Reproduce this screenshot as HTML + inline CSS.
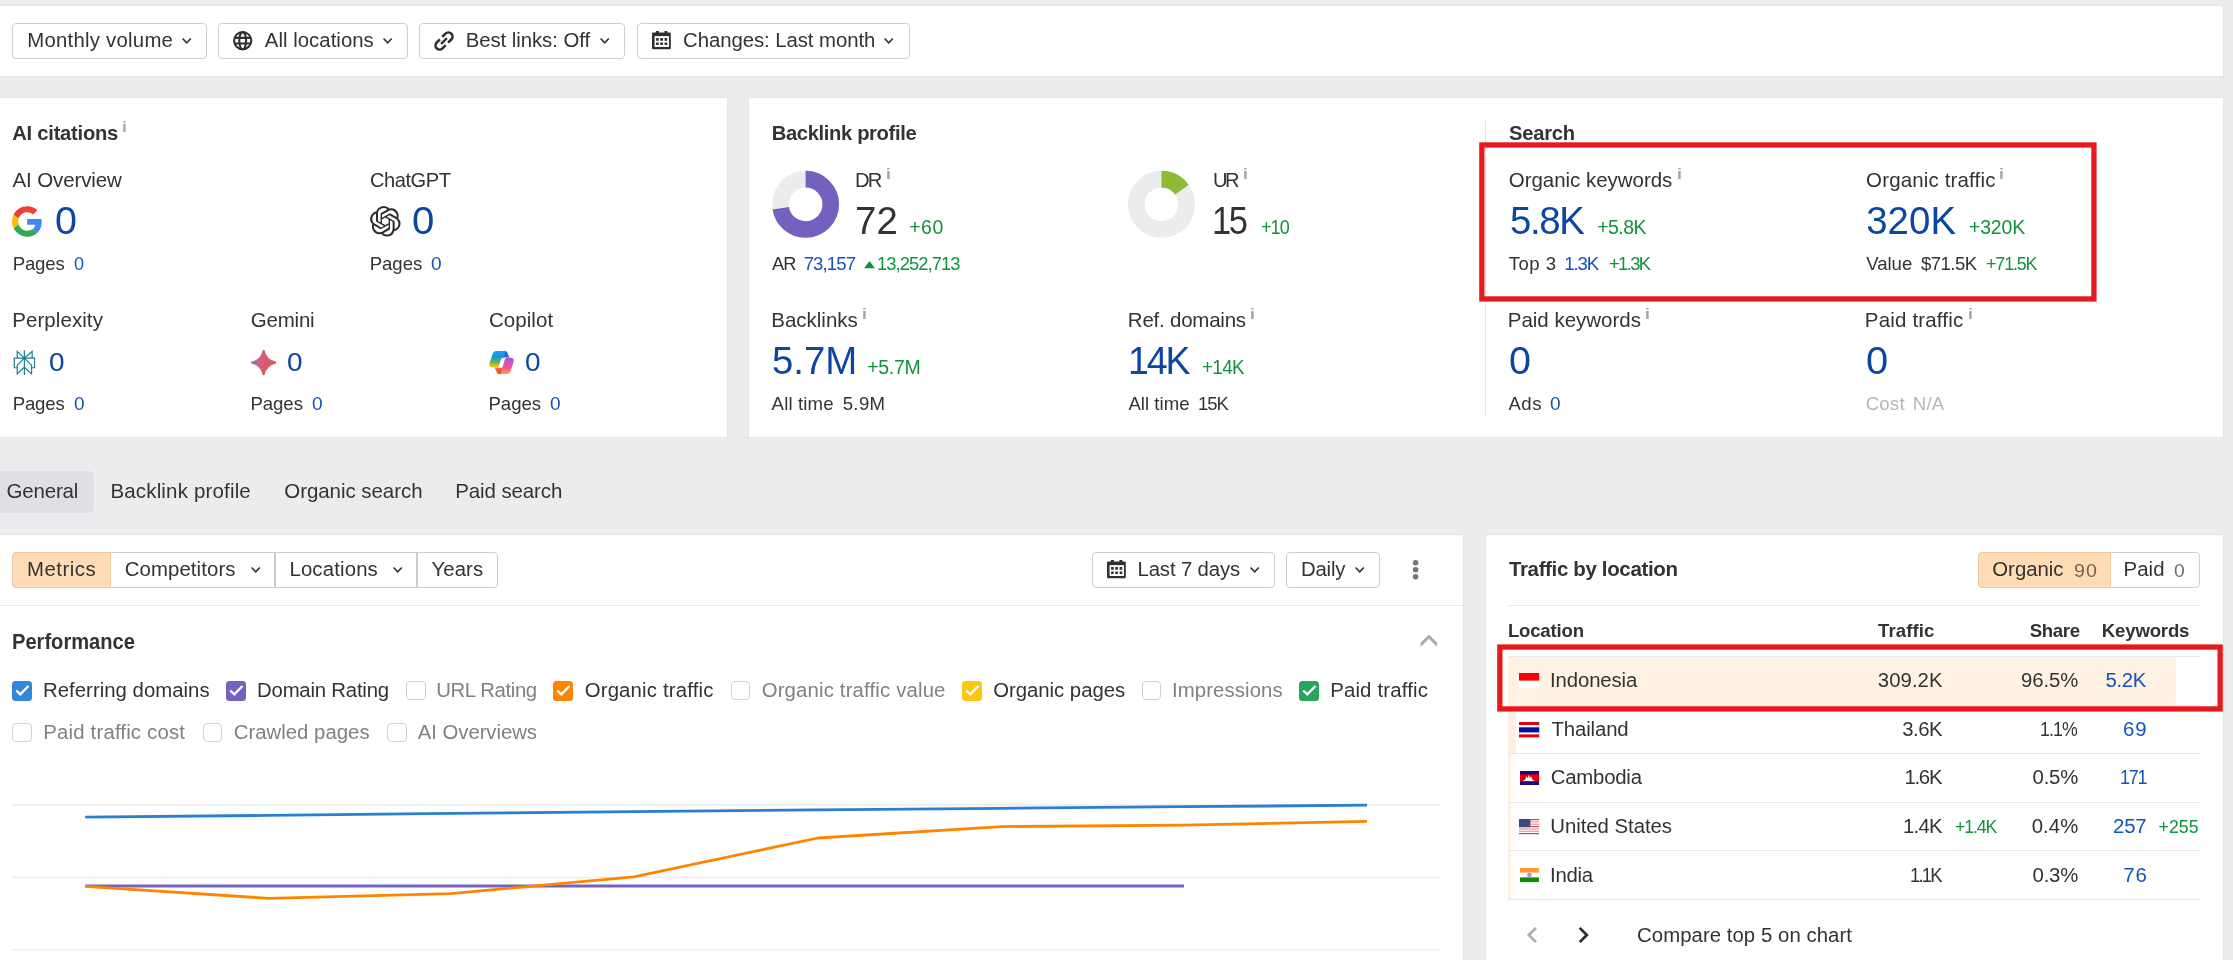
<!DOCTYPE html>
<html lang="en">
<head>
<meta charset="utf-8">
<title>Site overview</title>
<style>
html,body{margin:0;padding:0;background:#ebecee;}
body{font-family:"Liberation Sans",sans-serif;}
#root{will-change:transform;position:relative;width:2233px;height:960px;overflow:hidden;background:#ebecee;}
.t{position:absolute;white-space:nowrap;line-height:1;font-kerning:normal;}
.a{position:absolute;box-sizing:border-box;}
.w{background:#fff;box-shadow:0 0 0 1px rgba(40,50,70,0.035);}
.btn{position:absolute;box-sizing:border-box;border:1px solid #cfcfd1;border-radius:4px;background:#fff;}
.hl{position:absolute;height:1px;background:#e8e8ea;}
.red{position:absolute;box-sizing:border-box;border:5px solid #e21b22;}
.cb{position:absolute;box-sizing:border-box;width:20px;height:20px;border-radius:3.5px;}
.cb.off{border:1px solid #cfd1d5;background:#fff;width:19.4px;height:19.4px;margin:0.3px 0 0 0.2px;border-radius:4px;}
.cb svg{position:absolute;left:0;top:0;width:100%;height:100%;}
svg{position:absolute;overflow:visible;}
html,body{width:2233px;height:960px;overflow:hidden;}

</style>
</head>
<body>
<div id="root">
<!-- page blocks -->
<div class="a w" style="left:0;top:6px;width:2223px;height:70px;"></div>
<div class="a w" style="left:0;top:98px;width:727px;height:338.5px;"></div>
<div class="a w" style="left:749px;top:98px;width:1474px;height:338.5px;"></div>
<div class="a w" style="left:0;top:535px;width:1463px;height:425px;"></div>
<div class="a w" style="left:1486px;top:535px;width:737px;height:425px;"></div>

<!-- toolbar buttons -->
<div class="btn" style="left:12px;top:23px;width:195px;height:36px;"></div>
<div class="btn" style="left:218px;top:23px;width:190px;height:36px;"></div>
<div class="btn" style="left:419px;top:23px;width:206px;height:36px;"></div>
<div class="btn" style="left:637px;top:23px;width:273px;height:36px;"></div>
<svg style="left:181.95px;top:38.00px;" width="9.4" height="6" viewBox="0 0 9.4 6"><path d="M0.6 0.5L4.7 4.8L8.8 0.5" fill="none" stroke="#333" stroke-width="1.65"/></svg>
<svg style="left:382.65px;top:38.00px;" width="9.4" height="6" viewBox="0 0 9.4 6"><path d="M0.6 0.5L4.7 4.8L8.8 0.5" fill="none" stroke="#333" stroke-width="1.65"/></svg>
<svg style="left:599.95px;top:38.00px;" width="9.4" height="6" viewBox="0 0 9.4 6"><path d="M0.6 0.5L4.7 4.8L8.8 0.5" fill="none" stroke="#333" stroke-width="1.65"/></svg>
<svg style="left:883.65px;top:38.00px;" width="9.4" height="6" viewBox="0 0 9.4 6"><path d="M0.6 0.5L4.7 4.8L8.8 0.5" fill="none" stroke="#333" stroke-width="1.65"/></svg>

<!-- globe -->
<svg style="left:233.1px;top:31px;" width="19.4" height="19.4" viewBox="0 0 19.4 19.4"><g fill="none" stroke="#2f2f2f" stroke-width="2.1"><circle cx="9.7" cy="9.7" r="8.6"/><ellipse cx="9.7" cy="9.7" rx="3.4" ry="8.6"/><path d="M1.6 6.9h16.2M1.6 12.5h16.2"/></g></svg>
<!-- link -->
<svg style="left:433.8px;top:30.8px;" width="20" height="20" viewBox="-10 -10 20 20"><g transform="rotate(-45)" fill="none" stroke="#2f2f2f" stroke-width="2.55"><path d="M1.7 -4.1H6.2A4.1 4.1 0 0 1 6.2 4.1H1.7"/><path d="M-1.7 -4.1H-6.2A4.1 4.1 0 0 0 -6.2 4.1H-1.7"/><path d="M-4.1 0H4.1" stroke-width="2.2"/></g></svg>
<!-- calendar (toolbar) -->
<svg style="left:652.1px;top:30.9px;" width="18.8" height="18.2" viewBox="0 0 18.8 18.2"><path fill="#2f2f2f" d="M3.9 0h3v1.6h5.5V0h3v1.6h2.2a1.2 1.2 0 0 1 1.2 1.2V17a1.2 1.2 0 0 1-1.2 1.2H1.2A1.2 1.2 0 0 1 0 17V2.8a1.2 1.2 0 0 1 1.2-1.2h2.7z"/><rect x="2.55" y="5.1" width="14.45" height="10.9" fill="#fff"/><path fill="#2f2f2f" d="M4.1 7.1h2.6v2.6H4.1zM8.3 7.1h2.6v2.6H8.3zM12.6 7.1h2.6v2.6h-2.6zM4.1 11.5h2.6v2.6H4.1zM8.3 11.5h2.6v2.6H8.3zM12.6 11.5h2.6v2.6h-2.6z"/></svg>

<!-- AI icons -->
<svg style="left:11.8px;top:205.8px;" width="30.4" height="31" viewBox="0 0 48 48"><path fill="#EA4335" d="M24 9.5c3.54 0 6.71 1.22 9.21 3.6l6.85-6.85C35.9 2.38 30.47 0 24 0 14.62 0 6.51 5.38 2.56 13.22l7.98 6.19C12.43 13.72 17.74 9.5 24 9.5z"/><path fill="#4285F4" d="M46.98 24.55c0-1.57-.15-3.09-.38-4.55H24v9.02h12.94c-.58 2.96-2.26 5.48-4.78 7.18l7.73 6c4.51-4.18 7.09-10.36 7.09-17.65z"/><path fill="#FBBC05" d="M10.53 28.59c-.48-1.45-.76-2.99-.76-4.59s.27-3.14.76-4.59l-7.98-6.19C.92 16.46 0 20.12 0 24c0 3.88.92 7.54 2.56 10.78l7.97-6.19z"/><path fill="#34A853" d="M24 48c6.48 0 11.93-2.13 15.89-5.81l-7.73-6c-2.15 1.45-4.92 2.3-8.16 2.3-6.26 0-11.57-4.22-13.47-9.91l-7.98 6.19C6.51 42.62 14.62 48 24 48z"/></svg>
<svg style="left:369.6px;top:206px;" width="30.6" height="30.6" viewBox="0 0 24 24"><path fill="#2b2b2b" d="M22.2819 9.8211a5.9847 5.9847 0 0 0-.5157-4.9108 6.0462 6.0462 0 0 0-6.5098-2.9A6.0651 6.0651 0 0 0 4.9807 4.1818a5.9847 5.9847 0 0 0-3.9977 2.9 6.0462 6.0462 0 0 0 .7427 7.0966 5.98 5.98 0 0 0 .511 4.9107 6.051 6.051 0 0 0 6.5146 2.9001A5.9847 5.9847 0 0 0 13.2599 24a6.0557 6.0557 0 0 0 5.7718-4.2058 5.9894 5.9894 0 0 0 3.9977-2.9001 6.0557 6.0557 0 0 0-.7475-7.0729zm-9.022 12.6081a4.4755 4.4755 0 0 1-2.8764-1.0408l.1419-.0804 4.7783-2.7582a.7948.7948 0 0 0 .3927-.6813v-6.7369l2.02 1.1686a.071.071 0 0 1 .038.052v5.5826a4.504 4.504 0 0 1-4.4945 4.4944zm-9.6607-4.1254a4.4708 4.4708 0 0 1-.5346-3.0137l.142.0852 4.783 2.7582a.7712.7712 0 0 0 .7806 0l5.8428-3.3685v2.3324a.0804.0804 0 0 1-.0332.0615L9.74 19.9502a4.4992 4.4992 0 0 1-6.1408-1.6464zM2.3408 7.8956a4.485 4.485 0 0 1 2.3655-1.9728V11.6a.7664.7664 0 0 0 .3879.6765l5.8144 3.3543-2.0201 1.1685a.0757.0757 0 0 1-.071 0l-4.8303-2.7865A4.504 4.504 0 0 1 2.3408 7.872zm16.5963 3.8558L13.1038 8.364 15.1192 7.2a.0757.0757 0 0 1 .071 0l4.8303 2.7913a4.4944 4.4944 0 0 1-.6765 8.1042v-5.6772a.79.79 0 0 0-.407-.667zm2.0107-3.0231l-.142-.0852-4.7735-2.7818a.7759.7759 0 0 0-.7854 0L9.409 9.2297V6.8974a.0662.0662 0 0 1 .0284-.0615l4.8303-2.7866a4.4992 4.4992 0 0 1 6.6802 4.66zM8.3065 12.863l-2.02-1.1638a.0804.0804 0 0 1-.038-.0567V6.0742a4.4992 4.4992 0 0 1 7.3757-3.4537l-.142.0805L8.704 5.459a.7948.7948 0 0 0-.3927.6813zm1.0976-2.3654l2.602-1.4998 2.6069 1.4998v2.9994l-2.5974 1.4997-2.6067-1.4997Z"/></svg>
<!-- perplexity -->
<svg style="left:12.2px;top:349.9px;" width="24.8" height="25.2" viewBox="0 0 24 24" preserveAspectRatio="none"><path fill="#20808d" d="M22.3977 7.0896h-2.3106V.0676l-7.5094 6.3542V.1577h-1.1554v6.1966L4.4904 0v7.0896H1.6023v10.3976h2.8882V24l6.932-6.3591v6.2005h1.1554v-6.0469l6.9318 6.1807v-6.4879h2.8882V7.0896zm-3.4657-4.531v4.531h-5.355l5.355-4.531zm-13.2862.0676 4.8691 4.4634H5.6458V2.6262zM2.7576 16.332V8.245h7.8476l-6.1149 6.1147v1.9723H2.7576zm2.8882 5.0404v-6.5328l5.7768-5.7767v7.0111l-5.7768 5.2984zm12.7086.0248-5.7766-5.1509V9.0618l5.7766 5.7766v6.5588zm2.8882-5.0652h-1.733v-1.9723L13.3948 8.245h7.8478v8.087z"/></svg>
<!-- gemini -->
<svg style="left:250.8px;top:349.9px;" width="25.2" height="25.2" viewBox="-12.6 -12.6 25.2 25.2"><defs><linearGradient id="gm" x1="0" y1="0" x2="1" y2="0"><stop offset="0" stop-color="#9a6fd2"/><stop offset="0.22" stop-color="#b9689f"/><stop offset="0.45" stop-color="#d65c70"/><stop offset="1" stop-color="#db5a58"/></linearGradient></defs><path fill="url(#gm)" d="M-0.8 -12.6H0.8Q2.8 -2.8 12.6 -0.8V0.8Q2.8 2.8 0.8 12.6H-0.8Q-2.8 2.8 -12.6 0.8V-0.8Q-2.8 -2.8 -0.8 -12.6Z"/></svg>
<!-- copilot -->
<svg style="left:488.9px;top:351px;" width="25.1" height="23" viewBox="0 0 25.1 23"><defs>
<linearGradient id="cpa" x1="0" y1="0" x2="0" y2="1"><stop offset="0" stop-color="#1da2f2"/><stop offset="0.3" stop-color="#1593de"/><stop offset="0.62" stop-color="#4db06a"/><stop offset="0.85" stop-color="#c9c51e"/><stop offset="1" stop-color="#f7c40e"/></linearGradient>
<linearGradient id="cpb" x1="0" y1="0" x2="0" y2="1"><stop offset="0" stop-color="#a64ef2"/><stop offset="0.35" stop-color="#d653b3"/><stop offset="0.65" stop-color="#ef5a85"/><stop offset="1" stop-color="#ff9d4b"/></linearGradient>
<linearGradient id="cpc" x1="0" y1="0" x2="1" y2="1"><stop offset="0" stop-color="#1a3fd0"/><stop offset="1" stop-color="#2a82e4"/></linearGradient>
<linearGradient id="cpd" x1="0" y1="0" x2="0.4" y2="1"><stop offset="0" stop-color="#ff7a3c"/><stop offset="1" stop-color="#e43d3a"/></linearGradient>
</defs>
<path fill="url(#cpc)" d="M13.6 0H15.6Q17.9 0 18.6 1.9L20.4 6.6H12.6Z"/>
<path fill="url(#cpd)" d="M5.6 16.4H14.2L12.8 23H10.2Q8.3 23 7.7 21.2Z"/>
<path fill="url(#cpa)" d="M7.7 0H14.8Q16.6 0 16.1 1.7L12.3 14.6Q11.6 16.8 9.3 16.7L3.2 16.2Q-0.3 15.8 0.4 12.7L3.5 2.9Q4.5 0 7.7 0Z"/>
<path fill="#fff" d="M12.4 7.3H16.2L13.3 16.6H9.4Z"/>
<path fill="url(#cpb)" d="M19 6.4L22 6.8Q25.5 7.2 24.7 10.2L21.6 20.2Q20.7 23 17.6 23H13.3Q11.3 23 11.9 21L15.9 8.4Q16.6 6.2 19 6.4Z"/>
</svg>

<!-- donuts -->
<svg style="left:0;top:160px;" width="1300" height="90" viewBox="0 160 1300 90"><circle cx="805.6" cy="204.3" r="25.15" fill="none" stroke="#ebecee" stroke-width="16.6"/><circle cx="805.6" cy="204.3" r="25.15" fill="none" stroke="#7461bf" stroke-width="16.6" stroke-dasharray="113.78 200" transform="rotate(-90 805.6 204.3)"/><circle cx="1161.5" cy="204.3" r="25.15" fill="none" stroke="#ebecee" stroke-width="16.6"/><circle cx="1161.5" cy="204.3" r="25.15" fill="none" stroke="#8fba38" stroke-width="16.6" stroke-dasharray="23.7 200" transform="rotate(-90 1161.5 204.3)"/></svg>
<!-- AR triangle -->
<svg style="left:864px;top:261px;" width="11" height="7.2" viewBox="0 0 11 7.2"><path d="M5.5 0L11 7.2H0Z" fill="#12913f"/></svg>

<!-- search divider -->
<div class="a" style="left:1485px;top:121px;width:1px;height:294px;background:#e3e4e7;"></div>
<svg style="left:0;top:0;" width="2233" height="320" viewBox="0 0 2233 320"><rect x="1481.85" y="144.95" width="612.1" height="154" fill="none" stroke="#e41a1c" stroke-width="5.3"/></svg>

<!-- tabs -->
<div class="a" style="left:-6px;top:471px;width:100px;height:41.6px;border-radius:5px;background:#dee0e5;"></div>

<!-- chart header -->
<div class="a" style="left:12px;top:552px;width:486px;height:36px;border:1px solid #cfcfd1;border-radius:4px;background:#fff;"></div>
<div class="a" style="left:12px;top:552px;width:99px;height:36px;border:1px solid #edc9a1;border-radius:4px 0 0 4px;background:#ffdcb5;"></div>
<div class="a" style="left:274px;top:552px;width:2px;height:36px;background:#cbcccf;"></div>
<div class="a" style="left:416px;top:552px;width:2px;height:36px;background:#cbcccf;"></div>
<svg style="left:250.65px;top:567.40px;" width="9.4" height="6" viewBox="0 0 9.4 6"><path d="M0.6 0.5L4.7 4.8L8.8 0.5" fill="none" stroke="#333" stroke-width="1.65"/></svg>
<svg style="left:392.85px;top:567.40px;" width="9.4" height="6" viewBox="0 0 9.4 6"><path d="M0.6 0.5L4.7 4.8L8.8 0.5" fill="none" stroke="#333" stroke-width="1.65"/></svg>

<div class="btn" style="left:1092px;top:552px;width:183px;height:36px;"></div>
<div class="btn" style="left:1286px;top:552px;width:94px;height:36px;"></div>
<svg style="left:1106.9px;top:559.9px;" width="18.8" height="18.2" viewBox="0 0 18.8 18.2"><path fill="#2f2f2f" d="M3.9 0h3v1.6h5.5V0h3v1.6h2.2a1.2 1.2 0 0 1 1.2 1.2V17a1.2 1.2 0 0 1-1.2 1.2H1.2A1.2 1.2 0 0 1 0 17V2.8a1.2 1.2 0 0 1 1.2-1.2h2.7z"/><rect x="2.55" y="5.1" width="14.45" height="10.9" fill="#fff"/><path fill="#2f2f2f" d="M4.1 7.1h2.6v2.6H4.1zM8.3 7.1h2.6v2.6H8.3zM12.6 7.1h2.6v2.6h-2.6zM4.1 11.5h2.6v2.6H4.1zM8.3 11.5h2.6v2.6H8.3zM12.6 11.5h2.6v2.6h-2.6z"/></svg>
<svg style="left:1250.05px;top:567.00px;" width="9.4" height="6" viewBox="0 0 9.4 6"><path d="M0.6 0.5L4.7 4.8L8.8 0.5" fill="none" stroke="#333" stroke-width="1.65"/></svg>
<svg style="left:1355.15px;top:567.00px;" width="9.4" height="6" viewBox="0 0 9.4 6"><path d="M0.6 0.5L4.7 4.8L8.8 0.5" fill="none" stroke="#333" stroke-width="1.65"/></svg>
<div class="hl" style="left:0;top:605px;width:1463px;"></div>

<!-- checkboxes -->
<div class="cb" style="left:12px;top:680.5px;background:#3187d8;"><svg viewBox="0 0 20 20"><path d="M4.3 9.5L8.3 13.4L16.5 5" fill="none" stroke="#fff" stroke-width="2.4"/></svg></div>
<div class="cb" style="left:226px;top:680.5px;background:#7462c2;"><svg viewBox="0 0 20 20"><path d="M4.3 9.5L8.3 13.4L16.5 5" fill="none" stroke="#fff" stroke-width="2.4"/></svg></div>
<div class="cb off" style="left:406px;top:680.5px;"></div>
<div class="cb" style="left:553px;top:680.5px;background:#ff8500;"><svg viewBox="0 0 20 20"><path d="M4.3 9.5L8.3 13.4L16.5 5" fill="none" stroke="#fff" stroke-width="2.4"/></svg></div>
<div class="cb off" style="left:730.5px;top:680.5px;"></div>
<div class="cb" style="left:962px;top:680.5px;background:#fbc614;"><svg viewBox="0 0 20 20"><path d="M4.3 9.5L8.3 13.4L16.5 5" fill="none" stroke="#fff" stroke-width="2.4"/></svg></div>
<div class="cb off" style="left:1141.5px;top:680.5px;"></div>
<div class="cb" style="left:1299px;top:680.5px;background:#27a65b;"><svg viewBox="0 0 20 20"><path d="M4.3 9.5L8.3 13.4L16.5 5" fill="none" stroke="#fff" stroke-width="2.4"/></svg></div>
<div class="cb off" style="left:12px;top:722.5px;"></div>
<div class="cb off" style="left:202.5px;top:722.5px;"></div>
<div class="cb off" style="left:387px;top:722.5px;"></div>

<!-- chart -->
<svg style="left:0;top:780px;" width="1463" height="180" viewBox="0 780 1463 180">
<g stroke="#ececee" stroke-width="1.3"><path d="M12 805H1440M12 877.4H1440M12 949.8H1440"/></g>
<path d="M85.2 886H1184" fill="none" stroke="#7462c2" stroke-width="2.8"/>
<path d="M85.2 817.1L268.3 815.4L451.3 813.4L634.4 811.7L817.5 809.9L1000.6 808.3L1183.7 806.7L1367 805.2" fill="none" stroke="#2b7fd1" stroke-width="2.8"/>
<path d="M85.2 886.4L268.4 898.3L450.9 893.6L633.8 876.8L818 838L1001.6 826.6L1183.7 825.1L1367 821.4" fill="none" stroke="#ff8500" stroke-width="2.8" stroke-linejoin="round"/>
</svg>

<!-- traffic by location -->
<div class="a" style="left:1978px;top:552px;width:222px;height:36px;border:1px solid #cfcfd1;border-radius:4px;background:#fff;"></div>
<div class="a" style="left:1978px;top:552px;width:132.6px;height:36px;border:1px solid #edc9a1;border-radius:4px 0 0 4px;background:#ffdcb5;"></div>
<div class="hl" style="left:1508px;top:605px;width:692px;"></div>

<div class="hl" style="left:1508px;top:656px;width:692px;"></div>
<div class="a" style="left:1508px;top:656.6px;width:667.8px;height:48.6px;background:#fff2e5;"></div>
<div class="hl" style="left:1508px;top:704.8px;width:692px;"></div>
<div class="a" style="left:1508px;top:705.8px;width:7.9px;height:47px;background:#fdf1e3;"></div>
<div class="hl" style="left:1508px;top:752.6px;width:692px;"></div>
<div class="a" style="left:1508px;top:753.6px;width:3.4px;height:48px;background:#fdf1e3;"></div>
<div class="hl" style="left:1508px;top:801.8px;width:692px;"></div>
<div class="a" style="left:1508px;top:802.8px;width:2.8px;height:47px;background:#fdf1e3;"></div>
<div class="hl" style="left:1508px;top:850px;width:692px;"></div>
<div class="a" style="left:1508px;top:851px;width:2.6px;height:48px;background:#fdf1e3;"></div>
<div class="hl" style="left:1508px;top:899px;width:692px;"></div>

<!-- flags -->
<svg style="left:1518.9px;top:672.75px;" width="20.2" height="15.25" viewBox="0 0 20 15" preserveAspectRatio="none"><rect width="20" height="15" fill="#fff"/><rect width="20" height="7.5" fill="#f90008"/></svg>
<svg style="left:1518.9px;top:721.75px;" width="20.2" height="15.4" viewBox="0 0 20 15.4" preserveAspectRatio="none"><rect width="20" height="15.4" fill="#e30008"/><rect y="3" width="20" height="9.4" fill="#fff"/><rect y="5.3" width="20" height="5.1" fill="#00159b"/></svg>
<svg style="left:1519.9px;top:771px;" width="19.1" height="14" viewBox="0 0 19.1 14" preserveAspectRatio="none"><rect width="19.1" height="14" fill="#1b0b7d"/><rect y="3.3" width="19.1" height="7.3" fill="#e30008"/><path fill="#fff" d="M3.2 9.9l.9-.9h.9V7.7h.8V6.6l.6-1.6.6 1.6v.5h.8V6.1l.9-2.2.9 2.2v1h.8v-.5l.6-1.6.6 1.6v1.1h.8V9h.9l.9.9z"/></svg>
<svg style="left:1519px;top:818.8px;" width="20.1" height="15.2" viewBox="0 0 20 15" preserveAspectRatio="none"><rect width="20" height="15" fill="#fff"/><g fill="#c8414f"><rect width="20" height="1.15"/><rect y="2.3" width="20" height="1.15" opacity=".55"/><rect y="4.6" width="20" height="1.15" opacity=".55"/><rect y="6.9" width="20" height="1.15"/><rect y="9.2" width="20" height="1.15" opacity=".55"/><rect y="11.5" width="20" height="1.15" opacity=".55"/><rect y="13.85" width="20" height="1.15"/></g><rect width="11.3" height="8.05" fill="#3d4a7c"/></svg>
<svg style="left:1520px;top:867.9px;" width="18.9" height="14.1" viewBox="0 0 20 15" preserveAspectRatio="none"><rect width="20" height="15" fill="#fff"/><rect width="20" height="4.9" fill="#ff9933"/><rect y="10" width="20" height="5" fill="#128807"/><circle cx="10" cy="7.5" r="2.5" fill="#9c9cdc"/></svg>

<svg style="left:0;top:600px;" width="2233" height="140" viewBox="0 600 2233 140"><rect x="1499.85" y="647.05" width="720.3" height="61.9" fill="none" stroke="#e41a1c" stroke-width="5.3"/></svg>

<!-- pager -->
<svg style="left:0;top:0;" width="2233" height="960" viewBox="0 0 2233 960"><path d="M1535.95 927.85L1528.8 935L1535.95 942.15" fill="none" stroke="#adaeb0" stroke-width="2.7"/><path d="M1579.7 927.85L1586.85 935L1579.7 942.15" fill="none" stroke="#2b2b2b" stroke-width="2.7"/>
<path d="M1420.6 642.65L1428.85 634.4L1437.1 642.65V646.9L1428.85 638.64L1420.6 646.9Z" fill="#a9aaac"/>
<g fill="#757678"><circle cx="1415.6" cy="562.75" r="2.8"/><circle cx="1415.6" cy="569.75" r="2.8"/><circle cx="1415.6" cy="576.75" r="2.8"/></g>
</svg>

<span class="t" style="left:27.29px;top:29.77px;font-size:20.35px;color:#333333;letter-spacing:0.241px;">Monthly volume</span>
<span class="t" style="left:264.81px;top:29.77px;font-size:20.35px;color:#333333;letter-spacing:0.036px;">All locations</span>
<span class="t" style="left:465.71px;top:29.77px;font-size:20.35px;color:#333333;letter-spacing:-0.057px;">Best links: Off</span>
<span class="t" style="left:683.11px;top:29.77px;font-size:20.35px;color:#333333;letter-spacing:-0.066px;">Changes: Last month</span>
<span class="t" style="left:12.30px;top:122.90px;font-size:20.2px;color:#333333;letter-spacing:-0.255px;font-weight:700;">AI citations</span>
<span class="t" style="left:122.05px;top:119.32px;font-size:15.22px;color:#a3a5a9;transform:scaleX(1.1500);transform-origin:0 0;font-weight:700;">i</span>
<span class="t" style="left:771.67px;top:122.90px;font-size:20.2px;color:#333333;letter-spacing:-0.352px;font-weight:700;">Backlink profile</span>
<span class="t" style="left:1508.96px;top:122.70px;font-size:20.2px;color:#333333;letter-spacing:-0.237px;font-weight:700;">Search</span>
<span class="t" style="left:12.51px;top:169.66px;font-size:20.49px;color:#333333;letter-spacing:-0.113px;">AI Overview</span>
<span class="t" style="left:370.12px;top:169.66px;font-size:20.49px;color:#333333;letter-spacing:-0.450px;transform:scaleX(0.9789);transform-origin:0 0;">ChatGPT</span>
<span class="t" style="left:854.91px;top:169.66px;font-size:20.49px;color:#333333;letter-spacing:-1.961px;transform:scaleX(0.9875);transform-origin:0 0;">DR</span>
<span class="t" style="left:885.85px;top:166.12px;font-size:15.22px;color:#a3a5a9;transform:scaleX(1.1500);transform-origin:0 0;font-weight:700;">i</span>
<span class="t" style="left:1213.12px;top:169.66px;font-size:20.49px;color:#333333;letter-spacing:-2.562px;transform:scaleX(0.9793);transform-origin:0 0;">UR</span>
<span class="t" style="left:1242.65px;top:166.12px;font-size:15.22px;color:#a3a5a9;transform:scaleX(1.1500);transform-origin:0 0;font-weight:700;">i</span>
<span class="t" style="left:1508.77px;top:169.66px;font-size:20.49px;color:#333333;letter-spacing:-0.026px;">Organic keywords</span>
<span class="t" style="left:1676.85px;top:166.12px;font-size:15.22px;color:#a3a5a9;transform:scaleX(1.1500);transform-origin:0 0;font-weight:700;">i</span>
<span class="t" style="left:1866.11px;top:169.66px;font-size:20.49px;color:#333333;letter-spacing:0.154px;">Organic traffic</span>
<span class="t" style="left:1999.05px;top:166.12px;font-size:15.22px;color:#a3a5a9;transform:scaleX(1.1500);transform-origin:0 0;font-weight:700;">i</span>
<span class="t" style="left:55.26px;top:201.52px;font-size:38.37px;color:#0c46a3;transform:scaleX(1.0293);transform-origin:0 0;">0</span>
<span class="t" style="left:411.93px;top:201.52px;font-size:38.37px;color:#0c46a3;transform:scaleX(1.0481);transform-origin:0 0;">0</span>
<span class="t" style="left:855.00px;top:201.52px;font-size:38.37px;color:#333333;letter-spacing:0.172px;">72</span>
<span class="t" style="left:909.33px;top:217.51px;font-size:19.48px;color:#12913f;letter-spacing:0.427px;">+60</span>
<span class="t" style="left:1211.50px;top:201.52px;font-size:38.37px;color:#333333;letter-spacing:-2.710px;transform:scaleX(0.8998);transform-origin:0 0;">15</span>
<span class="t" style="left:1260.90px;top:217.51px;font-size:19.48px;color:#12913f;letter-spacing:-1.012px;transform:scaleX(0.9279);transform-origin:0 0;">+10</span>
<span class="t" style="left:1510.10px;top:201.52px;font-size:38.37px;color:#0c46a3;letter-spacing:-1.412px;">5.8K</span>
<span class="t" style="left:1597.33px;top:217.51px;font-size:19.48px;color:#12913f;letter-spacing:-0.588px;">+5.8K</span>
<span class="t" style="left:1866.20px;top:201.52px;font-size:38.37px;color:#0c46a3;letter-spacing:0.096px;">320K</span>
<span class="t" style="left:1968.99px;top:217.51px;font-size:19.48px;color:#12913f;letter-spacing:-0.171px;">+320K</span>
<span class="t" style="left:12.65px;top:255.26px;font-size:18.6px;color:#333333;letter-spacing:-0.146px;">Pages</span>
<span class="t" style="left:73.60px;top:255.26px;font-size:18.6px;color:#1553b7;transform:scaleX(0.9714);transform-origin:0 0;">0</span>
<span class="t" style="left:369.65px;top:255.26px;font-size:18.6px;color:#333333;letter-spacing:-0.021px;">Pages</span>
<span class="t" style="left:431.25px;top:255.26px;font-size:18.6px;color:#1553b7;transform:scaleX(1.0243);transform-origin:0 0;">0</span>
<span class="t" style="left:771.80px;top:255.26px;font-size:18.6px;color:#333333;letter-spacing:-0.862px;transform:scaleX(0.9846);transform-origin:0 0;">AR</span>
<span class="t" style="left:803.66px;top:255.26px;font-size:18.6px;color:#1553b7;letter-spacing:-0.905px;">73,157</span>
<span class="t" style="left:877.22px;top:255.26px;font-size:18.6px;color:#12913f;letter-spacing:-0.917px;transform:scaleX(0.9836);transform-origin:0 0;">13,252,713</span>
<span class="t" style="left:1508.87px;top:255.26px;font-size:18.6px;color:#333333;letter-spacing:0.431px;">Top 3</span>
<span class="t" style="left:1564.28px;top:255.26px;font-size:18.6px;color:#1553b7;letter-spacing:-1.134px;">1.3K</span>
<span class="t" style="left:1609.30px;top:255.26px;font-size:18.6px;color:#12913f;letter-spacing:-1.634px;transform:scaleX(0.9888);transform-origin:0 0;">+1.3K</span>
<span class="t" style="left:1866.19px;top:255.26px;font-size:18.6px;color:#333333;letter-spacing:-0.024px;">Value</span>
<span class="t" style="left:1920.70px;top:255.26px;font-size:18.6px;color:#333333;letter-spacing:-0.553px;transform:scaleX(0.9973);transform-origin:0 0;">$71.5K</span>
<span class="t" style="left:1985.80px;top:255.26px;font-size:18.6px;color:#12913f;letter-spacing:-1.171px;transform:scaleX(0.9614);transform-origin:0 0;">+71.5K</span>
<span class="t" style="left:12.21px;top:309.66px;font-size:20.49px;color:#333333;letter-spacing:0.081px;">Perplexity</span>
<span class="t" style="left:250.71px;top:309.66px;font-size:20.49px;color:#333333;letter-spacing:-0.190px;">Gemini</span>
<span class="t" style="left:488.96px;top:309.66px;font-size:20.49px;color:#333333;letter-spacing:0.071px;">Copilot</span>
<span class="t" style="left:771.21px;top:309.66px;font-size:20.49px;color:#333333;letter-spacing:0.010px;">Backlinks</span>
<span class="t" style="left:861.65px;top:306.22px;font-size:15.22px;color:#a3a5a9;transform:scaleX(1.1500);transform-origin:0 0;font-weight:700;">i</span>
<span class="t" style="left:1127.87px;top:309.66px;font-size:20.49px;color:#333333;letter-spacing:-0.224px;">Ref. domains</span>
<span class="t" style="left:1249.85px;top:306.22px;font-size:15.22px;color:#a3a5a9;transform:scaleX(1.1500);transform-origin:0 0;font-weight:700;">i</span>
<span class="t" style="left:1507.76px;top:309.66px;font-size:20.49px;color:#333333;">Paid keywords</span>
<span class="t" style="left:1644.85px;top:306.22px;font-size:15.22px;color:#a3a5a9;transform:scaleX(1.1500);transform-origin:0 0;font-weight:700;">i</span>
<span class="t" style="left:1864.87px;top:309.66px;font-size:20.49px;color:#333333;letter-spacing:0.177px;">Paid traffic</span>
<span class="t" style="left:1967.75px;top:306.22px;font-size:15.22px;color:#a3a5a9;transform:scaleX(1.1500);transform-origin:0 0;font-weight:700;">i</span>
<span class="t" style="left:49.10px;top:350.07px;font-size:25.44px;color:#0c46a3;transform:scaleX(1.0989);transform-origin:0 0;">0</span>
<span class="t" style="left:287.10px;top:350.07px;font-size:25.44px;color:#0c46a3;transform:scaleX(1.0989);transform-origin:0 0;">0</span>
<span class="t" style="left:525.10px;top:350.07px;font-size:25.44px;color:#0c46a3;transform:scaleX(1.0989);transform-origin:0 0;">0</span>
<span class="t" style="left:772.10px;top:341.52px;font-size:38.37px;color:#0c46a3;letter-spacing:-0.066px;">5.7M</span>
<span class="t" style="left:867.15px;top:357.51px;font-size:19.48px;color:#12913f;letter-spacing:-0.248px;">+5.7M</span>
<span class="t" style="left:1128.35px;top:341.52px;font-size:38.37px;color:#0c46a3;letter-spacing:-2.054px;transform:scaleX(0.9751);transform-origin:0 0;">14K</span>
<span class="t" style="left:1201.90px;top:357.51px;font-size:19.48px;color:#12913f;letter-spacing:-0.698px;transform:scaleX(0.9684);transform-origin:0 0;">+14K</span>
<span class="t" style="left:1509.25px;top:341.52px;font-size:38.37px;color:#0c46a3;transform:scaleX(1.0283);transform-origin:0 0;">0</span>
<span class="t" style="left:1866.24px;top:341.52px;font-size:38.37px;color:#0c46a3;transform:scaleX(1.0388);transform-origin:0 0;">0</span>
<span class="t" style="left:12.65px;top:395.26px;font-size:18.6px;color:#333333;letter-spacing:-0.146px;">Pages</span>
<span class="t" style="left:73.73px;top:395.26px;font-size:18.6px;color:#1553b7;transform:scaleX(1.0251);transform-origin:0 0;">0</span>
<span class="t" style="left:250.38px;top:395.26px;font-size:18.6px;color:#333333;letter-spacing:-0.031px;">Pages</span>
<span class="t" style="left:311.53px;top:395.26px;font-size:18.6px;color:#1553b7;transform:scaleX(1.0251);transform-origin:0 0;">0</span>
<span class="t" style="left:488.56px;top:395.26px;font-size:18.6px;color:#333333;letter-spacing:-0.077px;">Pages</span>
<span class="t" style="left:550.25px;top:395.26px;font-size:18.6px;color:#1553b7;transform:scaleX(1.0243);transform-origin:0 0;">0</span>
<span class="t" style="left:771.59px;top:395.26px;font-size:18.6px;color:#333333;letter-spacing:0.152px;">All time</span>
<span class="t" style="left:842.69px;top:395.26px;font-size:18.6px;color:#333333;letter-spacing:0.344px;">5.9M</span>
<span class="t" style="left:1128.45px;top:395.26px;font-size:18.6px;color:#333333;letter-spacing:0.013px;">All time</span>
<span class="t" style="left:1198.21px;top:395.26px;font-size:18.6px;color:#333333;letter-spacing:-0.953px;transform:scaleX(0.9898);transform-origin:0 0;">15K</span>
<span class="t" style="left:1508.40px;top:395.26px;font-size:18.6px;color:#333333;letter-spacing:0.538px;">Ads</span>
<span class="t" style="left:1550.05px;top:395.26px;font-size:18.6px;color:#1553b7;transform:scaleX(1.0243);transform-origin:0 0;">0</span>
<span class="t" style="left:1865.63px;top:395.26px;font-size:18.6px;color:#b4b6ba;letter-spacing:0.238px;">Cost</span>
<span class="t" style="left:1912.83px;top:395.26px;font-size:18.6px;color:#b4b6ba;letter-spacing:0.121px;">N/A</span>
<span class="t" style="left:6.53px;top:481.06px;font-size:20.49px;color:#333333;letter-spacing:-0.165px;">General</span>
<span class="t" style="left:110.43px;top:481.06px;font-size:20.49px;color:#333333;letter-spacing:0.172px;">Backlink profile</span>
<span class="t" style="left:284.28px;top:481.06px;font-size:20.49px;color:#333333;letter-spacing:-0.047px;">Organic search</span>
<span class="t" style="left:455.21px;top:481.06px;font-size:20.49px;color:#333333;letter-spacing:-0.103px;">Paid search</span>
<span class="t" style="left:27.01px;top:558.57px;font-size:20.35px;color:#333333;letter-spacing:0.512px;">Metrics</span>
<span class="t" style="left:124.71px;top:558.57px;font-size:20.35px;color:#333333;letter-spacing:0.106px;">Competitors</span>
<span class="t" style="left:289.43px;top:558.57px;font-size:20.35px;color:#333333;letter-spacing:0.161px;">Locations</span>
<span class="t" style="left:431.45px;top:558.57px;font-size:20.35px;color:#333333;letter-spacing:0.088px;">Years</span>
<span class="t" style="left:1137.51px;top:558.57px;font-size:20.35px;color:#333333;letter-spacing:-0.137px;">Last 7 days</span>
<span class="t" style="left:1300.95px;top:558.57px;font-size:20.35px;color:#333333;letter-spacing:-0.185px;">Daily</span>
<span class="t" style="left:11.51px;top:630.93px;font-size:22.53px;color:#333333;transform:scaleX(0.8928);transform-origin:0 0;font-weight:700;">Performance</span>
<span class="t" style="left:43.07px;top:680.17px;font-size:20.35px;color:#333333;letter-spacing:0.022px;">Referring domains</span>
<span class="t" style="left:257.07px;top:680.17px;font-size:20.35px;color:#333333;letter-spacing:-0.215px;">Domain Rating</span>
<span class="t" style="left:436.24px;top:680.17px;font-size:20.35px;color:#7f8185;letter-spacing:-0.383px;">URL Rating</span>
<span class="t" style="left:584.69px;top:680.17px;font-size:20.35px;color:#333333;letter-spacing:0.170px;">Organic traffic</span>
<span class="t" style="left:761.69px;top:680.17px;font-size:20.35px;color:#7f8185;letter-spacing:0.160px;">Organic traffic value</span>
<span class="t" style="left:993.19px;top:680.17px;font-size:20.35px;color:#333333;letter-spacing:-0.026px;">Organic pages</span>
<span class="t" style="left:1172.07px;top:680.17px;font-size:20.35px;color:#7f8185;letter-spacing:0.090px;">Impressions</span>
<span class="t" style="left:1330.17px;top:680.17px;font-size:20.35px;color:#333333;letter-spacing:0.181px;">Paid traffic</span>
<span class="t" style="left:43.37px;top:722.07px;font-size:20.35px;color:#7f8185;letter-spacing:0.177px;">Paid traffic cost</span>
<span class="t" style="left:233.71px;top:722.07px;font-size:20.35px;color:#7f8185;letter-spacing:0.018px;">Crawled pages</span>
<span class="t" style="left:417.82px;top:722.07px;font-size:20.35px;color:#7f8185;letter-spacing:-0.061px;">AI Overviews</span>
<span class="t" style="left:1508.94px;top:558.86px;font-size:20.49px;color:#333333;letter-spacing:-0.350px;font-weight:700;">Traffic by location</span>
<span class="t" style="left:1992.32px;top:558.57px;font-size:20.35px;color:#333333;letter-spacing:-0.017px;">Organic</span>
<span class="t" style="left:2073.70px;top:561.70px;font-size:18.31px;color:#75624f;letter-spacing:0.900px;transform:scaleX(1.0772);transform-origin:0 0;">90</span>
<span class="t" style="left:2123.62px;top:558.57px;font-size:20.35px;color:#333333;letter-spacing:0.038px;">Paid</span>
<span class="t" style="left:2173.80px;top:561.70px;font-size:18.31px;color:#6e6e70;transform:scaleX(1.0525);transform-origin:0 0;">0</span>
<span class="t" style="left:1507.89px;top:622.26px;font-size:18.6px;color:#333333;letter-spacing:-0.188px;font-weight:700;">Location</span>
<span class="t" style="left:1878.07px;top:622.26px;font-size:18.6px;color:#333333;letter-spacing:0.077px;font-weight:700;">Traffic</span>
<span class="t" style="left:2029.75px;top:622.26px;font-size:18.6px;color:#333333;letter-spacing:-0.348px;font-weight:700;">Share</span>
<span class="t" style="left:2101.80px;top:622.26px;font-size:18.6px;color:#333333;letter-spacing:-0.176px;font-weight:700;">Keywords</span>
<span class="t" style="left:1550.01px;top:669.97px;font-size:20.35px;color:#333333;letter-spacing:-0.114px;">Indonesia</span>
<span class="t" style="left:1877.80px;top:669.97px;font-size:20.35px;color:#333333;letter-spacing:0.046px;">309.2K</span>
<span class="t" style="left:2021.01px;top:669.97px;font-size:20.35px;color:#333333;letter-spacing:-0.110px;">96.5%</span>
<span class="t" style="left:2105.62px;top:669.97px;font-size:20.35px;color:#1553b7;letter-spacing:-0.353px;">5.2K</span>
<span class="t" style="left:1551.53px;top:718.87px;font-size:20.35px;color:#333333;letter-spacing:-0.126px;">Thailand</span>
<span class="t" style="left:1902.22px;top:718.87px;font-size:20.35px;color:#333333;letter-spacing:-0.520px;">3.6K</span>
<span class="t" style="left:2039.93px;top:718.87px;font-size:20.35px;color:#333333;letter-spacing:-1.019px;transform:scaleX(0.8712);transform-origin:0 0;">1.1%</span>
<span class="t" style="left:2123.22px;top:718.87px;font-size:20.35px;color:#1553b7;letter-spacing:0.900px;transform:scaleX(1.0027);transform-origin:0 0;">69</span>
<span class="t" style="left:1550.71px;top:767.17px;font-size:20.35px;color:#333333;letter-spacing:-0.205px;">Cambodia</span>
<span class="t" style="left:1904.40px;top:767.17px;font-size:20.35px;color:#333333;letter-spacing:-1.247px;">1.6K</span>
<span class="t" style="left:2032.56px;top:767.17px;font-size:20.35px;color:#333333;letter-spacing:-0.224px;">0.5%</span>
<span class="t" style="left:2120.12px;top:767.17px;font-size:20.35px;color:#1553b7;letter-spacing:-1.337px;transform:scaleX(0.8832);transform-origin:0 0;">171</span>
<span class="t" style="left:1550.32px;top:816.17px;font-size:20.35px;color:#333333;letter-spacing:-0.040px;">United States</span>
<span class="t" style="left:1902.97px;top:816.17px;font-size:20.35px;color:#333333;letter-spacing:-0.770px;">1.4K</span>
<span class="t" style="left:1955.05px;top:818.89px;font-size:17.73px;color:#12913f;letter-spacing:-1.102px;">+1.4K</span>
<span class="t" style="left:2031.65px;top:816.17px;font-size:20.35px;color:#333333;letter-spacing:0.077px;">0.4%</span>
<span class="t" style="left:2113.05px;top:816.17px;font-size:20.35px;color:#1553b7;letter-spacing:-0.173px;">257</span>
<span class="t" style="left:2158.54px;top:818.89px;font-size:17.73px;color:#12913f;letter-spacing:0.021px;">+255</span>
<span class="t" style="left:1550.01px;top:865.07px;font-size:20.35px;color:#333333;letter-spacing:-0.266px;">India</span>
<span class="t" style="left:1910.39px;top:865.07px;font-size:20.35px;color:#333333;letter-spacing:-1.963px;transform:scaleX(0.9061);transform-origin:0 0;">1.1K</span>
<span class="t" style="left:2032.56px;top:865.07px;font-size:20.35px;color:#333333;letter-spacing:-0.224px;">0.3%</span>
<span class="t" style="left:2123.35px;top:865.07px;font-size:20.35px;color:#1553b7;letter-spacing:0.756px;">76</span>
<span class="t" style="left:1637.04px;top:924.87px;font-size:20.35px;color:#333333;letter-spacing:0.054px;">Compare top 5 on chart</span>
</div>
</body>
</html>
